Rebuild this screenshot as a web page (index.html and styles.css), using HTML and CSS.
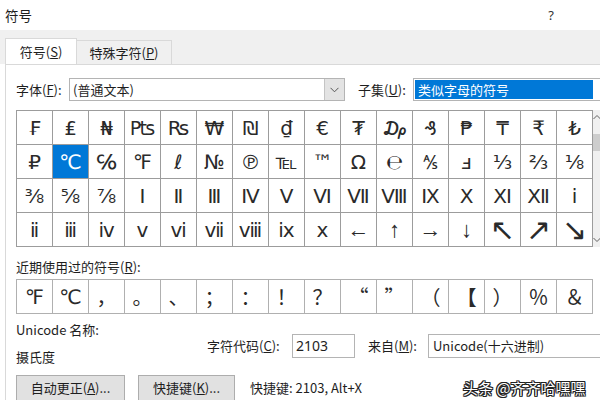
FILE: index.html
```html
<!DOCTYPE html>
<html lang="zh-CN">
<head>
<meta charset="utf-8">
<title>符号</title>
<link rel="stylesheet" href="styles.css">
</head>
<body>
<div class="titlebar"><span class="title">符号</span><span class="help">?</span></div>
<div class="tabs">
  <div class="tab active">符号(<u>S</u>)</div>
  <div class="tab inactive">特殊字符(<u>P</u>)</div>
</div>
<div class="panel">
  <div class="fontrow">
    <span class="lbl lbl-font">字体(<u>F</u>):</span>
    <div class="combo font-combo">
      <span class="val">(普通文本)</span>
      <span class="drop"><svg width="9" height="6" viewBox="0 0 9 6"><path d="M0.5 0.8 L4.5 4.8 L8.5 0.8" fill="none" stroke="#555" stroke-width="1"/></svg></span>
    </div>
    <span class="lbl lbl-subset">子集(<u>U</u>):</span>
    <div class="combo subset-combo"><span class="sel">类似字母的符号</span></div>
  </div>

  <div class="gridwrap">
    <div class="grid symbols">
      <div class="cell">₣</div><div class="cell">₤</div><div class="cell">₦</div><div class="cell">₧</div><div class="cell">₨</div><div class="cell">₩</div><div class="cell">₪</div><div class="cell">₫</div><div class="cell">€</div><div class="cell">₮</div><div class="cell">₯</div><div class="cell">₰</div><div class="cell">₱</div><div class="cell">₸</div><div class="cell">₹</div><div class="cell">₺</div>
      <div class="cell">₽</div><div class="cell selected">℃</div><div class="cell">℅</div><div class="cell">℉</div><div class="cell">ℓ</div><div class="cell">№</div><div class="cell">℗</div><div class="cell">℡</div><div class="cell">™</div><div class="cell">Ω</div><div class="cell">℮</div><div class="cell">⅍</div><div class="cell">ⅎ</div><div class="cell">⅓</div><div class="cell">⅔</div><div class="cell">⅛</div>
      <div class="cell">⅜</div><div class="cell">⅝</div><div class="cell">⅞</div><div class="cell">Ⅰ</div><div class="cell">Ⅱ</div><div class="cell">Ⅲ</div><div class="cell">Ⅳ</div><div class="cell">Ⅴ</div><div class="cell">Ⅵ</div><div class="cell">Ⅶ</div><div class="cell">Ⅷ</div><div class="cell">Ⅸ</div><div class="cell">Ⅹ</div><div class="cell">Ⅺ</div><div class="cell">Ⅻ</div><div class="cell">ⅰ</div>
      <div class="cell">ⅱ</div><div class="cell">ⅲ</div><div class="cell">ⅳ</div><div class="cell">ⅴ</div><div class="cell">ⅵ</div><div class="cell">ⅶ</div><div class="cell">ⅷ</div><div class="cell">ⅸ</div><div class="cell">ⅹ</div><div class="cell arrow-cell">←</div><div class="cell arrow-cell">↑</div><div class="cell arrow-cell">→</div><div class="cell arrow-cell">↓</div><div class="cell diag">↖</div><div class="cell diag">↗</div><div class="cell diag">↘</div>
    </div>
    <div class="scroll">
      <svg class="arrow" width="8" height="6" viewBox="0 0 8 6"><path d="M0.5 5 L4 1.5 L7.5 5" fill="none" stroke="#606060" stroke-width="1"/></svg>
      <div class="thumb"></div>
      <svg class="arrow down" width="8" height="6" viewBox="0 0 8 6"><path d="M0.5 1 L4 4.5 L7.5 1" fill="none" stroke="#606060" stroke-width="1"/></svg>
    </div>
  </div>

  <div class="recent-lbl">近期使用过的符号(<u>R</u>):</div>
  <div class="grid recent">
    <div class="cell">℉</div><div class="cell">℃</div><div class="cell cjk">，</div><div class="cell cjk">。</div><div class="cell cjk">、</div><div class="cell cjk">；</div><div class="cell cjk">：</div><div class="cell cjk">！</div><div class="cell cjk">？</div><div class="cell cjk">“</div><div class="cell cjk">”</div><div class="cell cjk">（</div><div class="cell cjk bold">【</div><div class="cell cjk">）</div><div class="cell cjk">％</div><div class="cell cjk">＆</div>
  </div>

  <div class="info">
    <div class="namecol">
      <div class="line">Unicode 名称:</div>
      <div class="line second">摄氏度</div>
    </div>
    <div class="codecol">
      <span class="lbl lbl-code">字符代码(<u>C</u>):</span>
      <div class="textbox">2103</div>
      <span class="lbl lbl-from">来自(<u>M</u>):</span>
      <div class="combo from-combo"><span class="val">Unicode(十六进制)</span></div>
    </div>
  </div>

  <div class="buttons">
    <div class="btn btn-auto">自动更正(<u>A</u>)...</div>
    <div class="btn btn-key">快捷键(<u>K</u>)...</div>
    <span class="shortcut">快捷键: 2103, Alt+X</span>
  </div>
</div>
<div class="watermark">头条 @齐齐哈嘿嘿</div>
</body>
</html>
```

FILE: styles.css
```css
html, body {
  margin: 0;
  padding: 0;
}
body {
  width: 600px;
  height: 400px;
  overflow: hidden;
  background: #fff;
  font-family: "Noto Sans CJK SC", "Noto Sans", sans-serif;
  font-size: 13px;
  line-height: 16px;
  color: #1e1e1e;
  position: relative;
}
u {
  text-decoration: underline;
  text-underline-offset: 1px;
}
.titlebar {
  height: 30px;
  display: flex;
  align-items: center;
  padding-left: 5px;
  font-size: 13.5px;
}
.help {
  margin-left: auto;
  margin-right: 46px;
  font-family: "Noto Sans", sans-serif;
  font-size: 13px;
  color: #333;
}
.tabs {
  box-sizing: border-box;
  height: 34px;
  background: #f0f0f0;
  display: flex;
  align-items: flex-end;
  padding-left: 5px;
}
.tab {
  box-sizing: border-box;
  border: 1px solid #d9d9d9;
  border-bottom: none;
  display: flex;
  align-items: center;
  justify-content: center;
}
.tab.active {
  width: 72px;
  height: 26px;
  background: #fff;
}
.tab.inactive {
  width: 95px;
  height: 24px;
  border-left: none;
  background: #f0f0f0;
}
.panel {
  box-sizing: border-box;
  margin-left: 5px;
  border-left: 1px solid #d9d9d9;
  border-top: 1px solid #d9d9d9;
  padding: 13px 0 0 10px;
  height: 336px;
  overflow: hidden;
}
.fontrow {
  display: flex;
  align-items: center;
  height: 23px;
}
.lbl {
  flex-shrink: 0;
  white-space: nowrap;
}
.lbl-font {
  width: 53px;
}
.lbl-subset {
  margin-left: 13px;
  width: 55px;
}
.combo {
  box-sizing: border-box;
  height: 23px;
  border: 1px solid #b4b4b4;
  display: flex;
  align-items: center;
  flex-shrink: 0;
  background: #fff;
}
.combo .val {
  padding-left: 3px;
}
.font-combo {
  width: 276px;
}
.drop {
  margin-left: auto;
  box-sizing: border-box;
  width: 20px;
  height: 100%;
  background: #e3e3e3;
  border-left: 1px solid #c4c4c4;
  display: flex;
  align-items: center;
  justify-content: center;
}
.subset-combo {
  width: 200px;
  padding: 1px;
}
.subset-combo .sel {
  box-sizing: border-box;
  width: 178px;
  height: 19px;
  background: #0078d7;
  color: #fff;
  padding-left: 3px;
  display: flex;
  align-items: center;
}
.gridwrap {
  display: flex;
  margin-top: 9px;
}
.grid {
  display: grid;
  grid-template-columns: repeat(16, 35px);
  grid-auto-rows: 33px;
  gap: 1px;
  background: #9c9c9c;
  border: 1px solid #9c9c9c;
  flex-shrink: 0;
  width: max-content;
}
.cell {
  background: #fff;
  display: flex;
  align-items: center;
  justify-content: center;
  font-family: "DejaVu Sans", "Noto Sans", sans-serif;
  font-size: 20px;
  line-height: 1;
  color: #2a2a2a;
  overflow: hidden;
  white-space: nowrap;
}
.cell.selected {
  background: #0078d7;
  color: #fff;
}
.cell.arrow-cell {
  font-family: "Liberation Sans", "DejaVu Sans", sans-serif;
  font-size: 22px;
}
.cell.diag {
  font-size: 30px;
}
.cell.cjk {
  font-family: "Noto Sans CJK SC", sans-serif;
  font-size: 20px;
}
.cell.bold {
  font-weight: 700;
}
.scroll {
  width: 8px;
  background: #f0f0f0;
  display: flex;
  flex-direction: column;
  align-items: center;
  padding-top: 4px;
  box-sizing: border-box;
}
.thumb {
  margin-top: 14px;
  width: 8px;
  height: 17px;
  background: #cdcdcd;
}
.arrow.down {
  margin-top: auto;
  margin-bottom: 4px;
}
.recent-lbl {
  margin-top: 12px;
}
.recent {
  margin-top: 4px;
  background: #b0b0b0;
  border-color: #b0b0b0;
}
.info {
  display: flex;
  margin-top: 8px;
}
.namecol {
  width: 191px;
  flex-shrink: 0;
}
.namecol .second {
  margin-top: 11px;
}
.codecol {
  display: flex;
  align-items: center;
  margin-top: 12px;
  height: 24px;
}
.lbl-code {
  width: 85px;
}
.textbox {
  box-sizing: border-box;
  width: 63px;
  height: 24px;
  border: 1px solid #b4b4b4;
  padding-left: 3px;
  display: flex;
  align-items: center;
  font-family: "Noto Sans", sans-serif;
  font-size: 14px;
  flex-shrink: 0;
}
.lbl-from {
  margin-left: 13px;
  width: 60px;
}
.from-combo {
  width: 180px;
  height: 24px;
}
.from-combo .val {
  padding-left: 4px;
}
.buttons {
  display: flex;
  align-items: center;
  margin-top: 10px;
}
.btn {
  box-sizing: border-box;
  height: 26px;
  background: #e1e1e1;
  border: 1px solid #adadad;
  display: flex;
  align-items: center;
  justify-content: center;
  flex-shrink: 0;
}
.btn-auto {
  width: 109px;
}
.btn-key {
  width: 97px;
  margin-left: 13px;
}
.shortcut {
  margin-left: 15px;
  white-space: nowrap;
}
.watermark {
  position: absolute;
  left: 463px;
  top: 378px;
  font-size: 15px;
  line-height: 20px;
  color: #fff;
  white-space: nowrap;
  text-shadow: 1px 0 0 #222, -1px 0 0 #222, 0 1px 0 #222, 0 -1px 0 #222, 1px 1px 0 #222, -1px -1px 0 #222, 1px -1px 0 #222, -1px 1px 0 #222;
}
```
